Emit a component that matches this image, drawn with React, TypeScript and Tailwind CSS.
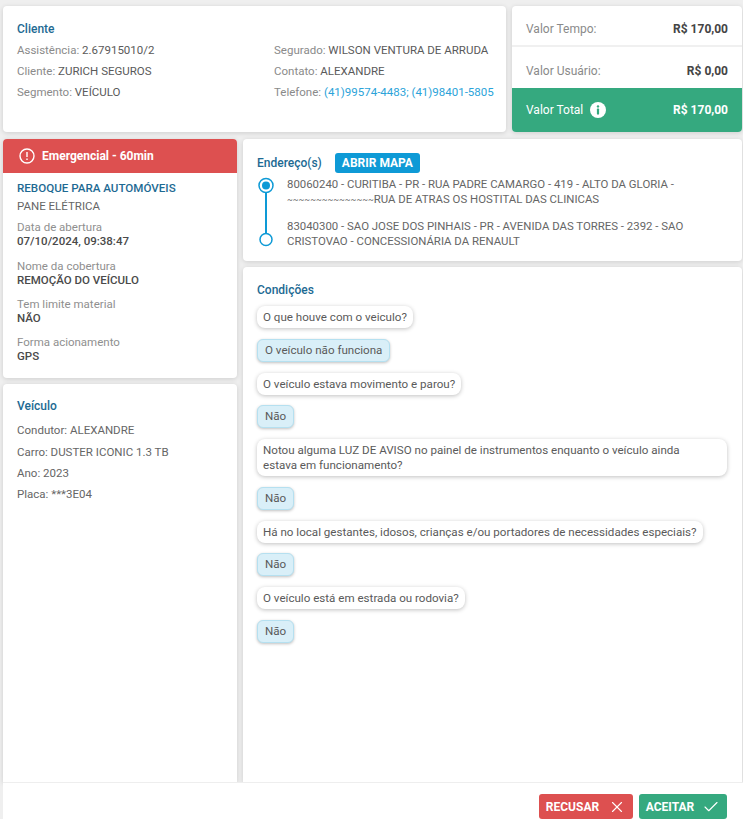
import React from "react";
import { Check, X } from "lucide-react";

const shadow = "shadow-[0_1px_5px_rgba(0,0,0,0.14)]";

const Label = ({ name, children }: { name: string; children: React.ReactNode }) => (
  <p className="h-[21px] leading-[21px] text-[#8a8a8a] whitespace-nowrap">
    {name}: <span className="text-[#5a5a5a]">{children}</span>
  </p>
);

const Field = ({ label, value, className }: { label: string; value: string; className: string }) => (
  <div className={className}>
    <p className="leading-[15px] text-[#8f8f8f]">{label}</p>
    <p className="-mt-px leading-[15px] text-[#4a4a4a] font-medium">{value}</p>
  </div>
);

const Question = ({ children, className = "" }: { children: React.ReactNode; className?: string }) => (
  <div className={`w-fit rounded-lg bg-white pl-[6px] py-[3.5px] text-[11.6px] leading-[15px] text-[#5a5a5a] shadow-[0_1px_4px_rgba(0,0,0,0.25)] ${className}`}>
    {children}
  </div>
);

const Answer = ({ children, className = "" }: { children: React.ReactNode; className?: string }) => (
  <div className={`w-fit rounded-md border border-[#b5e0f0] bg-[#d9eff8] px-[7px] py-[3px] text-[11.6px] leading-[15px] text-[#5a5a5a] shadow-[0_1px_3px_rgba(0,0,0,0.25)] ${className}`}>
    {children}
  </div>
);

const InfoIcon = ({ size }: { size: number }) => (
  <svg width={size} height={size} viewBox="0 0 16 16">
    <circle cx="8" cy="8" r="8" fill="#fff" />
    <circle cx="8" cy="4.4" r="1.2" fill="#35a97f" />
    <rect x="6.9" y="6.6" width="2.2" height="6" rx="0.6" fill="#35a97f" />
  </svg>
);

export default function App() {
  return (
    <div className="flex h-[819px] w-[743px] flex-col overflow-hidden bg-[#efefef] font-['Roboto',sans-serif] text-[11.5px]">
      <div className="flex h-[126px] shrink-0 gap-[6px] mt-[6px] pl-[3px] pr-px">
        <section className={`w-[503px] rounded bg-white pl-[14px] pt-[15px] ${shadow}`}>
          <h2 className="h-[17px] text-[12px] leading-[17px] font-medium text-[#1d6a93]">Cliente</h2>
          <div className="mt-[2px] grid grid-cols-[257px_1fr]">
            <div>
              <Label name="Assistência">2.67915010/2</Label>
              <Label name="Cliente">ZURICH SEGUROS</Label>
              <Label name="Segmento">VEÍCULO</Label>
            </div>
            <div>
              <Label name="Segurado">WILSON VENTURA DE ARRUDA</Label>
              <Label name="Contato">ALEXANDRE</Label>
              <Label name="Telefone"><span className="text-[#2ba3d9]">(41)99574-4483; (41)98401-5805</span></Label>
            </div>
          </div>
        </section>
        <section className={`flex flex-1 flex-col overflow-hidden rounded bg-white ${shadow}`}>
          <div className="flex h-[41px] items-center justify-between border-b-2 border-[#f0f0f0] px-[14px] pt-[6px] text-[12px]">
            <span className="text-[#8a8a8a]">Valor Tempo:</span>
            <span className="font-bold text-[#444]">R$ 170,00</span>
          </div>
          <div className="flex h-[41px] items-center justify-between px-[14px] pt-[6px] text-[12px]">
            <span className="text-[#8a8a8a]">Valor Usuário:</span>
            <span className="font-bold text-[#444]">R$ 0,00</span>
          </div>
          <div className="flex flex-1 items-center justify-between bg-[#35a97f] px-[14px] text-[12px] text-white">
            <span className="flex items-center gap-[7px]">Valor Total <InfoIcon size={16} /></span>
            <span className="font-bold">R$ 170,00</span>
          </div>
        </section>
      </div>

      <div className="mt-[7px] flex min-h-0 flex-1 gap-[6px] pl-[3px] pr-px">
        <div className="flex w-[234px] shrink-0 flex-col gap-[6px]">
          <section className={`h-[239px] overflow-hidden rounded bg-white ${shadow}`}>
            <div className="flex h-[34px] items-center gap-[7px] bg-[#dd5050] pl-[16px] text-[12px] font-bold text-white">
              <svg width="16" height="16" viewBox="0 0 16 16" fill="none" stroke="#fff" strokeWidth="1.4">
                <circle cx="8" cy="8" r="7" />
                <path d="M8 4v5" />
                <path d="M8 10.6v1.4" />
              </svg>
              Emergencial - 60min
            </div>
            <div className="pl-[14px]">
              <p className="mt-[6px] text-[11.6px] leading-[18px] font-medium text-[#1d6a93]">REBOQUE PARA AUTOMÓVEIS</p>
              <p className="leading-[18px] text-[#666]">PANE ELÉTRICA</p>
              <Field className="mt-[5px]" label="Data de abertura" value="07/10/2024, 09:38:47" />
              <Field className="mt-[10px]" label="Nome da cobertura" value="REMOÇÃO DO VEÍCULO" />
              <Field className="mt-[9px]" label="Tem limite material" value="NÃO" />
              <Field className="mt-[9px]" label="Forma acionamento" value="GPS" />
            </div>
          </section>
          <section className={`flex-1 rounded-t bg-white pl-[14px] pt-[14px] ${shadow}`}>
            <h2 className="mb-[4px] h-[17px] text-[12px] leading-[17px] font-medium text-[#1d6a93]">Veículo</h2>
            <p className="h-[22px] leading-[22px] text-[#666]">Condutor: ALEXANDRE</p>
            <p className="h-[22px] leading-[22px] text-[#666]">Carro: DUSTER ICONIC 1.3 TB</p>
            <p className="h-[21px] leading-[21px] text-[#666]">Ano: 2023</p>
            <p className="h-[21px] leading-[21px] text-[#666]">Placa: ***3E04</p>
          </section>
        </div>

        <div className="flex min-w-0 flex-1 flex-col gap-[6px]">
          <section className={`h-[122px] rounded bg-white pl-[14px] pr-[40px] pt-[14px] ${shadow}`}>
            <div className="flex h-[20px] items-center gap-[13px]">
              <h2 className="text-[12px] font-medium text-[#1d6a93]">Endereço(s)</h2>
              <button className="h-[20px] rounded-[3px] bg-[#0e9ad6] px-[7px] text-[12px] font-bold text-white">ABRIR MAPA</button>
            </div>
            <div className="mt-[3px] flex">
              <svg width="18" height="72" viewBox="0 0 18 72" className="mt-[1px] shrink-0" fill="none" stroke="#0e9ad6">
                <path d="M9 16V56" strokeWidth="2" />
                <circle cx="9" cy="8.5" r="7" strokeWidth="1.5" />
                <circle cx="9" cy="8.5" r="4" fill="#0e9ad6" stroke="none" />
                <circle cx="9" cy="62.5" r="6" strokeWidth="1.5" fill="#fff" />
              </svg>
              <div className="ml-[12px] flex-1 pt-px text-[11.4px] leading-[15px] text-[#666]">
                <p>80060240 - CURITIBA - PR - RUA PADRE CAMARGO - 419 - ALTO DA GLORIA - <span className="text-[8.5px]">~~~~~~~~~~~~~~~</span>RUA DE ATRAS OS HOSTITAL DAS CLINICAS</p>
                <p className="mt-[11px]">83040300 - SAO JOSE DOS PINHAIS - PR - AVENIDA DAS TORRES - 2392 - SAO CRISTOVAO - CONCESSIONÁRIA DA RENAULT</p>
              </div>
            </div>
          </section>
          <section className={`flex-1 rounded-t bg-white pl-[14px] pr-[15px] pt-[15px] ${shadow}`}>
            <h2 className="h-[17px] text-[12px] leading-[17px] font-medium text-[#1d6a93]">Condições</h2>
            <Question className="mt-[7px] pr-[6px]">O que houve com o veiculo?</Question>
            <Answer className="mt-[11px]">O veículo não funciona</Answer>
            <Question className="mt-[11px] pr-[6px]">O veículo estava movimento e parou?</Question>
            <Answer className="mt-[10px]">Não</Answer>
            <Question className="mt-[11px] w-full! pr-[40px]">Notou alguma LUZ DE AVISO no painel de instrumentos enquanto o veículo ainda estava em funcionamento?</Question>
            <Answer className="mt-[11px]">Não</Answer>
            <Question className="mt-[11px] pr-[6px]">Há no local gestantes, idosos, crianças e/ou portadores de necessidades especiais?</Question>
            <Answer className="mt-[10px]">Não</Answer>
            <Question className="mt-[11px] pr-[6px]">O veículo está em estrada ou rodovia?</Question>
            <Answer className="mt-[11px]">Não</Answer>
          </section>
        </div>
      </div>

      <footer className="ml-[3px] flex h-[37px] shrink-0 items-start justify-end gap-[6px] border-t border-[#eee] bg-white pr-[16px] pt-[11px]">
        <button className="flex h-[25px] w-[94px] items-center justify-center gap-[9px] rounded-[3px] bg-[#dd5050] text-[12px] font-bold text-white">
          RECUSAR <X size={18} strokeWidth={1.5} />
        </button>
        <button className="flex h-[25px] w-[88px] items-center justify-center gap-[8px] rounded-[3px] bg-[#35a97f] text-[12px] font-bold text-white">
          ACEITAR <Check size={18} strokeWidth={1.5} />
        </button>
      </footer>
    </div>
  );
}
